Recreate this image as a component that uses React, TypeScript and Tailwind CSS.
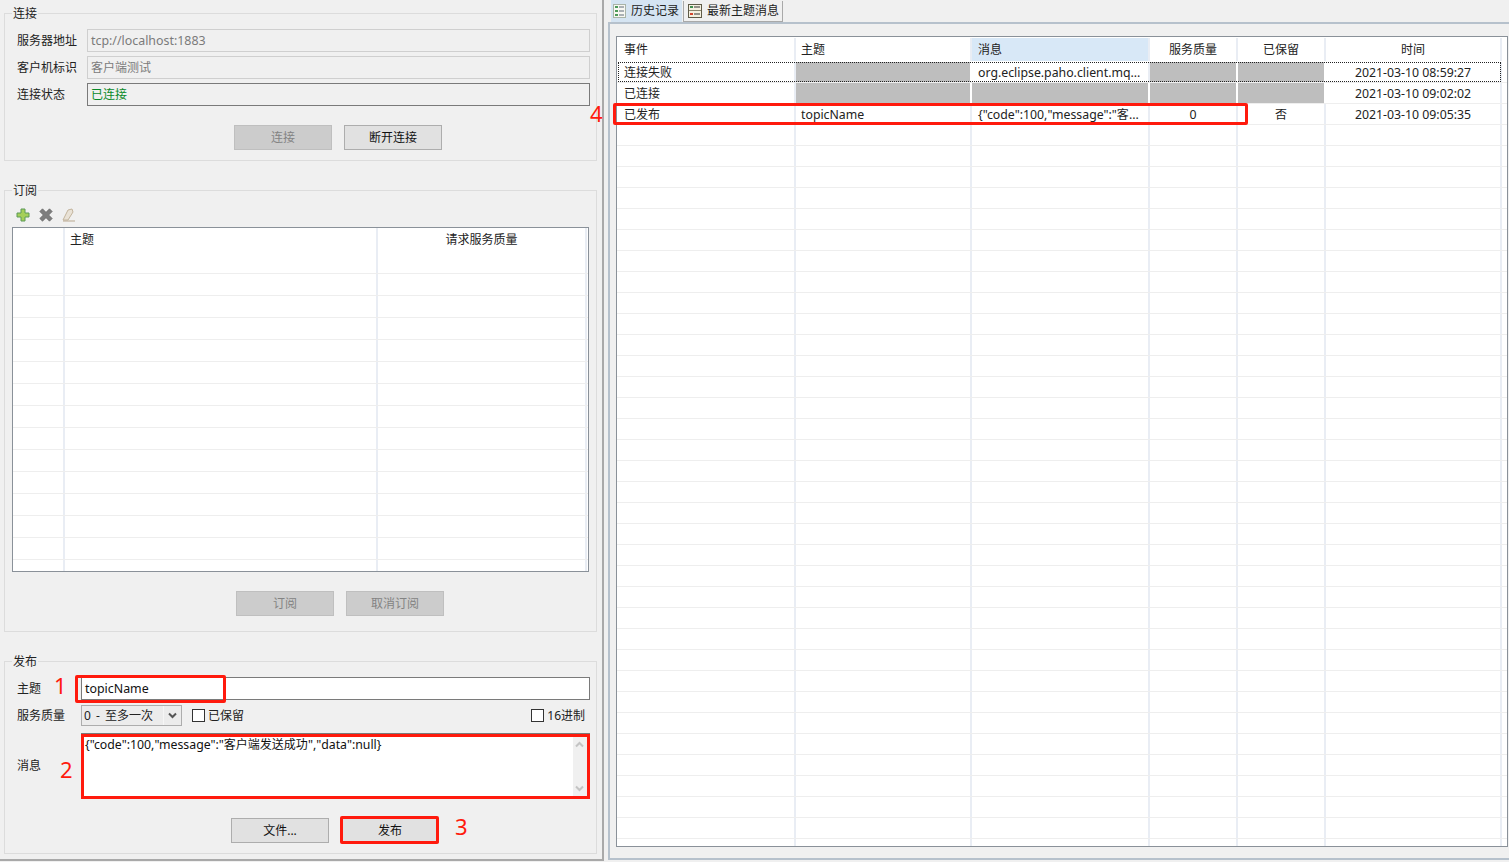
import React from "react";

const sans = "font-['Noto_Sans','Noto_Sans_CJK_SC',sans-serif]";

const Cjk = ({ children }: { children: React.ReactNode }) => (
  <span className="text-[12px]">{children}</span>
);

const Group = ({
  title,
  className,
  children,
}: {
  title: string;
  className: string;
  children: React.ReactNode;
}) => (
  <div className={`relative border border-[#dcdcdc] mx-[4px] w-[593px] ${className}`}>
    <span className="absolute -top-[8px] left-[7px] bg-[#f0f0f0] px-[1px] text-[12px] leading-[16px] text-[#222]">
      {title}
    </span>
    {children}
  </div>
);

const Btn = ({
  text,
  disabled,
  className = "",
}: {
  text: string;
  disabled?: boolean;
  className?: string;
}) => (
  <div
    className={`flex items-center justify-center w-[98px] h-[25px] border text-[12px] ${
      disabled
        ? "bg-[#cccccc] border-[#bfbfbf] text-[#838383]"
        : "bg-[#e1e1e1] border-[#adadad] text-[#111]"
    } ${className}`}
  >
    {text}
  </div>
);

const Field = ({
  label,
  value,
  className = "",
  dark,
}: {
  label: string;
  value: React.ReactNode;
  className?: string;
  dark?: boolean;
}) => (
  <div className="flex items-center h-[23px] pl-[12px] pr-[6px]">
    <span className="w-[70px] text-[12px] text-[#222] shrink-0">{label}</span>
    <div
      className={`flex-1 h-[23px] border bg-[#f0f0f0] pl-[3px] pt-[1px] flex items-center ${
        dark ? "border-[#7a7a7a]" : "border-[#cfcfcf]"
      } ${className}`}
    >
      {value}
    </div>
  </div>
);

const PlusIcon = () => (
  <svg width="14" height="14" viewBox="0 0 14 14">
    <path d="M5 1h4v4h4v4H9v4H5V9H1V5h4z" fill="#a5cf5a" stroke="#5c9a58" strokeWidth="1" />
  </svg>
);

const CrossIcon = () => (
  <svg width="14" height="14" viewBox="0 0 14 14">
    <path d="M3.5 0.8L7 4.3l3.5-3.5 2.7 2.7L9.7 7l3.5 3.5-2.7 2.7L7 9.7l-3.5 3.5-2.7-2.7L4.3 7 .8 3.5z" fill="#7d7d7d" stroke="#666" strokeWidth="0.7" />
  </svg>
);

const EraserIcon = () => (
  <svg width="14" height="14" viewBox="0 0 14 14">
    <path d="M1 12L6 2l4-1 1 3-5 8z" fill="#e9e2d6" stroke="#c3b49d" strokeWidth="1" />
    <path d="M1 13h12" stroke="#b9a88f" strokeWidth="1" />
  </svg>
);

const HistoryIcon = () => (
  <svg width="13" height="14" viewBox="0 0 13 14">
    <rect x="0.5" y="0.5" width="12" height="13" fill="#f7f7f2" stroke="#a9b4a8" />
    <rect x="2" y="2" width="3" height="2" fill="#4c9a5a" />
    <rect x="2" y="6" width="3" height="2" fill="#4c9a5a" />
    <rect x="2" y="10" width="3" height="2" fill="#4c9a5a" />
    <path d="M6 3h5M6 7h5M6 11h5" stroke="#5e6b78" />
  </svg>
);

const LatestIcon = () => (
  <svg width="14" height="14" viewBox="0 0 14 14">
    <rect x="0.5" y="0.5" width="13" height="13" fill="#f4f0e0" stroke="#5f5b48" />
    <rect x="2" y="2" width="3" height="2" fill="#3f8f4f" />
    <path d="M6 3h6" stroke="#333" />
    <path d="M1 6.5h12" stroke="#8a8670" />
    <rect x="2" y="9" width="3" height="2" fill="#d2452f" />
    <path d="M6 10h6" stroke="#333" />
  </svg>
);

const Chevron = ({ up }: { up?: boolean }) => (
  <svg width="9" height="7" viewBox="0 0 9 7">
    <path d={up ? "M1 5.5l3.5-3.5 3.5 3.5" : "M1 1.5l3.5 3.5 3.5-3.5"} fill="none" stroke="#c4c4c4" strokeWidth="2" />
  </svg>
);

const Check = ({ label, className = "" }: { label: React.ReactNode; className?: string }) => (
  <div className={`flex items-center gap-[3px] ${className}`}>
    <div className="w-[13px] h-[13px] border border-[#333] bg-white" />
    <span className="text-[12px] text-[#222]">{label}</span>
  </div>
);

const colWidths = ["w-[179px]", "w-[176px]", "w-[178px]", "w-[88px]", "w-[88px]", "w-[176px]"];
const headPad = ["pl-[7px]", "pl-[5px]", "pl-[6px]", "justify-center", "justify-center", "justify-center"];
const rowPad = ["pl-[7px]", "pl-[5px]", "pl-[6px]", "justify-center", "justify-center", "justify-center"];

const headers = ["事件", "主题", "消息", "服务质量", "已保留", "时间"];

const rows = [
  {
    cells: ["连接失败", "", "org.eclipse.paho.client.mq...", "", "", "2021-03-10 08:59:27"],
    focus: true,
  },
  { cells: ["已连接", "", "", "", "", "2021-03-10 09:02:02"], focus: false },
  {
    cells: ["已发布", "topicName", "msg", "0", "否", "2021-03-10 09:05:35"],
    focus: false,
  },
];

const emptyRows = Array.from({ length: 35 }, (_, i) => i);
const subRows = Array.from({ length: 15 }, (_, i) => i);

const cellText = (text: string) => {
  if (text === "msg") {
    return (
      <span className="text-[12.3px]">
        {'{"code":100,"message":"'}
        <Cjk>客</Cjk>...
      </span>
    );
  }
  return text;
};

const EventTable = () => (
  <div className="ml-[6px] mt-[12px] w-[892px] h-[811px] border border-[#8a9199] bg-white overflow-hidden text-[#222]">
    <div className="flex h-[24px] mt-[1px]">
      {headers.map((h, i) => (
        <div
          key={h}
          className={`${colWidths[i]} shrink-0 h-[23px] flex items-center text-[12px] border-r-2 border-[#e9edf4] ${headPad[i]} ${
            i === 2 ? "bg-[#d8e8f7]" : ""
          }`}
        >
          {h}
        </div>
      ))}
    </div>
    {rows.map((row) => (
      <div key={row.cells[0]} className="relative flex h-[21px] border-b border-[#eeeeee]">
        {row.cells.map((c, i) => (
          <div
            key={i}
            className={`${colWidths[i]} shrink-0 flex items-center pt-[2px] border-r-2 border-[#e9edf4] ${rowPad[i]} ${
              i === 0 || c === "否" ? "text-[12px]" : "text-[12.3px]"
            } ${c === "" ? "bg-[#bebebe] border-r-white" : ""}`}
          >
            {cellText(c)}
          </div>
        ))}
        {row.focus && (
          <div className="absolute left-[1px] top-0 w-[883px] h-[20px] border border-dotted border-[#222]" />
        )}
      </div>
    ))}
    {emptyRows.map((r) => (
      <div key={r} className="flex h-[21px] border-b border-[#eeeeee]">
        {colWidths.map((w, i) => (
          <div key={i} className={`${w} shrink-0 border-r-2 border-[#e9edf4]`} />
        ))}
      </div>
    ))}
  </div>
);

const SubTable = () => (
  <div className="ml-[7px] w-[577px] h-[345px] border border-[#8a9199] bg-white overflow-hidden">
    <div className="flex h-[24px] text-[12px] text-[#222]">
      <div className="w-[52px] border-r-2 border-[#e9edf4]" />
      <div className="w-[313px] pl-[5px] pt-[3px] border-r-2 border-[#e9edf4]">主题</div>
      <div className="w-[209px] text-center pt-[3px] border-r-2 border-[#e9edf4]">请求服务质量</div>
    </div>
    {subRows.map((r) => (
      <div key={r} className="flex h-[22px] border-b border-[#eeeeee]">
        <div className="w-[52px] border-r-2 border-[#e9edf4]" />
        <div className="w-[313px] border-r-2 border-[#e9edf4]" />
        <div className="w-[209px] border-r-2 border-[#e9edf4]" />
      </div>
    ))}
  </div>
);

const Annotations = () => (
  <>
    <div className="absolute left-[75px] top-[675px] w-[151px] h-[28px] border-[3px] border-[#ff1a0d] rounded-[2px]" />
    <div className="absolute left-[81px] top-[734px] w-[509px] h-[65px] border-[3px] border-[#ff1a0d]" />
    <div className="absolute left-[340px] top-[816px] w-[99px] h-[28px] border-[3px] border-[#ff1a0d] rounded-[2px]" />
    <div className="absolute left-[613px] top-[103px] w-[635px] h-[22px] border-[3px] border-[#ff1a0d] rounded-[2px]" />
    <span className="absolute left-[54px] top-[671px] text-[22px] leading-[28px] text-[#ff1a0d]">1</span>
    <span className="absolute left-[60px] top-[755px] text-[22px] leading-[28px] text-[#ff1a0d]">2</span>
    <span className="absolute left-[455px] top-[812px] text-[22px] leading-[28px] text-[#ff1a0d]">3</span>
    <span className="absolute left-[590px] top-[99px] text-[22px] leading-[28px] text-[#ff1a0d]">4</span>
  </>
);

export default function App() {
  return (
    <div className={`relative flex w-[1509px] h-[862px] overflow-hidden bg-[#f0f0f0] ${sans}`}>
      <div className="w-[604px] h-[861px] shrink-0 border-r-2 border-b-2 border-[#a9a9a9] pt-[13px]">
        <Group title="连接" className="h-[148px] pt-[15px]">
          <Field label="服务器地址" value={<span className="text-[12.4px] text-[#7b7b7b]">tcp://localhost:1883</span>} />
          <div className="h-[4px]" />
          <Field label="客户机标识" value={<span className="text-[12px] text-[#7b7b7b]">客户端测试</span>} />
          <div className="h-[4px]" />
          <Field dark label="连接状态" value={<span className="text-[12px] text-[#0a8a2a]">已连接</span>} />
          <div className="flex gap-[12px] ml-[229px] mt-[19px]">
            <Btn disabled text="连接" />
            <Btn text="断开连接" />
          </div>
        </Group>

        <Group title="订阅" className="mt-[29px] h-[442px]">
          <div className="flex items-center gap-[9px] pl-[11px] mt-[16px] h-[16px]">
            <PlusIcon />
            <CrossIcon />
            <EraserIcon />
          </div>
          <div className="h-[4px]" />
          <SubTable />
          <div className="flex gap-[12px] ml-[231px] mt-[19px]">
            <Btn disabled text="订阅" />
            <Btn disabled text="取消订阅" />
          </div>
        </Group>

        <Group title="发布" className="mt-[29px] h-[193px] pt-[15px]">
          <div className="flex items-center h-[23px] pl-[12px] pr-[6px]">
            <span className="w-[64px] text-[12px] text-[#222]">主题</span>
            <div className="flex-1 h-[23px] border border-[#7a7a7a] bg-white pl-[3px] pt-[1px] flex items-center text-[12.4px] text-[#111]">
              topicName
            </div>
          </div>
          <div className="flex items-center h-[21px] pl-[12px] pr-[11px] mt-[5px]">
            <span className="w-[64px] text-[12px] text-[#222] shrink-0">服务质量</span>
            <div className="flex w-[101px] h-[21px] border border-[#adadad] bg-[#ececec] items-center">
              <span className="flex-1 pl-[2px] text-[12px] text-[#222] [word-spacing:2px]">0 - 至多一次</span>
              <div className="w-[18px] h-full flex items-center justify-center border-l border-[#f6f6f6]">
                <svg width="9" height="7" viewBox="0 0 9 7">
                  <path d="M1 1.5l3.5 3.5 3.5-3.5" fill="none" stroke="#555" strokeWidth="2" />
                </svg>
              </div>
            </div>
            <Check className="ml-[10px]" label="已保留" />
            <Check className="ml-auto" label="16进制" />
          </div>
          <div className="flex mt-[7px] pl-[12px] pr-[6px] h-[65px]">
            <span className="w-[64px] self-center text-[12px] text-[#222]">消息</span>
            <div className="flex flex-1 border border-[#7a7a7a] bg-white">
              <div className="flex-1 pl-[3px] pt-[2px] text-[12.3px] leading-[18px] text-[#111]">
                {'{"code":100,"message":"'}
                <Cjk>客户端发送成功</Cjk>
                {'","data":null}'}
              </div>
              <div className="w-[16px] bg-[#f0f0f0] flex flex-col items-center justify-between pt-[7px] pb-[5px] pr-[3px]">
                <Chevron up />
                <Chevron />
              </div>
            </div>
          </div>
          <div className="flex gap-[12px] ml-[226px] mt-[20px]">
            <Btn text="文件..." />
            <Btn text="发布" />
          </div>
        </Group>
      </div>

      <div className="w-[4px] shrink-0" />

      <div className="flex-1 flex flex-col">
        <div className="flex h-[22px] pl-[3px] items-end">
          <div className="flex items-center gap-[5px] w-[71px] h-[22px] bg-[#d5e4f2] pl-[2px] text-[12px] text-[#222]">
            <HistoryIcon />
            <span>历史记录</span>
          </div>
          <div className="flex items-center gap-[5px] w-[100px] h-[21px] ml-[1px] border border-t-0 border-[#a9a9a9] bg-[#f0f0f0] pl-[4px] text-[12px] text-[#222]">
            <LatestIcon />
            <span>最新主题消息</span>
          </div>
        </div>
        <div className="h-[838px] border-l-2 border-t-2 border-b-2 border-[#b6c1cc]">
          <EventTable />
        </div>
      </div>

      <Annotations />
    </div>
  );
}
